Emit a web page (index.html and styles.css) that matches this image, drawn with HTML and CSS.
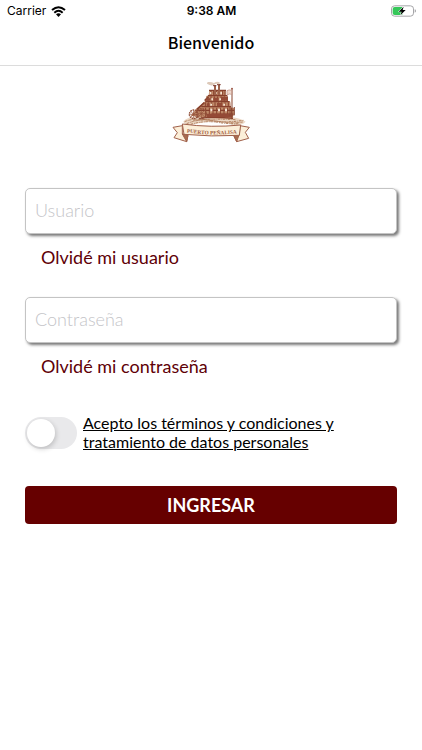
FILE: index.html
```html
<!DOCTYPE html>
<html lang="es">
<head>
<meta charset="utf-8">
<meta name="viewport" content="width=device-width, initial-scale=1">
<title>Bienvenido</title>
<link rel="stylesheet" href="styles.css">
</head>
<body>
<div class="status">
  <div class="carrier">
    <span>Carrier</span>
    <svg class="wifi" viewBox="0 0 45 33" aria-hidden="true">
      <path d="M3 12Q22.500-5 42 12" fill="none" stroke="#000" stroke-width="6"/>
      <path d="M10 20Q22.500 9 35 20" fill="none" stroke="#000" stroke-width="6"/>
      <path d="M15 25Q22.500 19 30 25L22.500 33Z"/>
    </svg>
  </div>
  <time class="clock">9:38 AM</time>
  <svg class="battery" viewBox="0 0 75 36" aria-hidden="true">
    <rect x="1.500" y="2.500" width="66" height="31" rx="9" fill="#fff" stroke="#a5a5a8" stroke-width="3"/>
    <path d="M11 6H34V30H11Q5 30 5 24V12Q5 6 11 6Z" fill="#35c759"/>
    <path d="M71 13Q75 14 75 18T71 23Z" fill="#a5a5a8"/>
    <path d="M38 5L23 20H32L28 31L44 15H35Z" stroke="#fff" stroke-width="3" paint-order="stroke"/>
  </svg>
</div>
<header class="nav"><h1>Bienvenido</h1></header>
<main>
  <svg class="logo" viewBox="3 0 300 228" role="img" aria-label="Puerto Peñalisa">
    <path d="M70 142Q88 125 113 129H215Q241 132 257 143Q246 154 226 155Q188 140 151 143Q107 146 86 157Q72 151 70 142Z" fill="#ecd9c6"/>
    <g fill="none" stroke="#ad7754" stroke-width="3" stroke-dasharray="7 3 3 2">
      <path d="M74 143Q104 130 148 139T250 139M80 149Q120 132 168 141T248 144M92 151Q132 139 173 145T237 149M100 139Q155 133 226 137"/>
    </g>
    <path d="M108 105L136 81L139 66L146 64L148 48H197V65L204 69V81L211 85V99L222 102L223 119L216 134L134 132L92 125Z" fill="#c08a69"/>
    <g fill="none" stroke="#87402d" stroke-width="4">
      <path d="M147 49H198M144 65H202M136 83H209M124 98H213M109 109H222M123 132Q166 128 219 133"/>
      <path d="M153 51V64M161 51V64M170 51V64M179 51V64M188 51V64M195 51V64" stroke-width="3"/>
      <path d="M144 67V81M153 67V81M163 67V81M173 67V81M183 67V81M193 67V81M202 67V81" stroke-width="3"/>
      <path d="M136 85V97M145 85V97M155 85V97M165 85V97M175 85V97M185 85V97M195 85V97M205 85V97" stroke-width="3"/>
      <path d="M137 101V130M148 101V130M159 101V130M170 101V130M181 101V130M192 101V130M203 101V130M214 102V130" stroke-width="3"/>
      <path d="M134 80L145 69M111 106L133 86M154 121H220" stroke-width="5"/>
    </g>
    <path d="M138 73H150V80H137ZM160 71H176V81H160ZM183 69H201V80H183ZM140 88H149V96H140ZM171 87H187V96H171ZM140 119H220L216 130H140Z" fill="#944a36"/>
    <g fill="#f5e3d2"><path d="M149 54H154V61H149ZM165 54H170V61H165ZM181 54H186V61H181ZM154 73H159V79H154ZM178 73H183V79H178ZM151 89H156V95H151ZM190 89H195V95H190ZM151 104H157V112H151ZM174 104H180V112H174ZM195 104H201V112H195Z"/></g>
    <path d="M162 36H168V63H162ZM174 33H180V63H174Z" fill="#9d624a"/>
    <path d="M159 35H169M171 32H182" stroke="#70281c" stroke-width="3"/>
    <path d="M162 33Q151 36 144 31Q137 27 145 24Q154 23 162 27Q172 20 180 26Q179 31 174 31Q168 27 162 33Z" fill="#ddc9b9"/>
    <path d="M216 46V134M210 99V126M223 99V124" fill="none" stroke="#864633" stroke-width="3"/>
    <path d="M201 50Q207 46 215 49V61Q208 58 201 63Z" fill="#efd9ce" stroke="#bd8979" stroke-width="2"/>
    <circle cx="216" cy="44" r="3" fill="#9c5948"/>
    <path d="M211 96L216 73" fill="none" stroke="#c69582" stroke-width="2"/>
    <g fill="none" stroke="#92503a" stroke-width="4">
      <circle cx="101" cy="121" r="13" stroke-dasharray="5 2"/>
      <circle cx="124" cy="119" r="15" stroke-dasharray="6 2"/>
      <path d="M89 121H113M101 109V133M92 112L110 130M110 112L92 130M111 119H138M124 105V133M114 109L134 129M134 109L114 129" stroke-width="2"/>
    </g>
    <g fill="#fcefd9" stroke="#a0604a" stroke-width="3" stroke-linejoin="round">
      <path d="M67 155L39 160L52 176L42 191L80 203L84 184L67 180Z"/>
      <path d="M240 155L268 160L256 175L266 193L230 203L221 184L238 180Z"/>
      <path d="M67 180L84 184L80 203ZM238 180L221 184L230 203Z" fill="#a86c4f"/>
      <path d="M67 150Q153 162 242 153L238 184Q154 189 72 181Z"/>
    </g>
    <path id="ribbon" d="M72 174Q154 187 239 177" fill="none"/>
    <text class="logo-text"><textPath href="#ribbon" startOffset="50%" text-anchor="middle">PUERTO PEÑALISA</textPath></text>
  </svg>
  <form class="login">
    <div class="field">
      <input class="box" type="text" placeholder="Usuario" aria-label="Usuario">
      <a class="forgot" href="#">Olvidé mi usuario</a>
    </div>
    <div class="field">
      <input class="box" type="password" placeholder="Contraseña" aria-label="Contraseña">
      <a class="forgot" href="#">Olvidé mi contraseña</a>
    </div>
    <div class="terms">
      <input class="switch" id="accept" type="checkbox" role="switch">
      <label for="accept">Acepto los términos y condiciones y tratamiento de datos personales</label>
    </div>
    <button class="submit" type="button">INGRESAR</button>
  </form>
</main>
</body>
</html>
```
FILE: styles.css
```css
* { box-sizing: border-box; }
body {
  margin: 0;
  background: #fff;
  color: #000;
  font-family: Lato, sans-serif;
}
.status {
  display: grid;
  grid-template-columns: 1fr auto 1fr;
  align-items: center;
  height: 22px;
  padding: 0 6px 0 7px;
  font: 12px/22px Inter, sans-serif;
}
.carrier { display: flex; align-items: center; gap: 5px; }
.wifi { width: 15px; height: 11px; }
.clock { font-weight: 600; }
.battery { width: 25px; height: 12px; justify-self: end; }
.nav {
  display: flex;
  align-items: center;
  justify-content: center;
  height: 44px;
  padding-bottom: 4px;
  border-bottom: 1px solid #dcdcdc;
}
h1 { margin: 0; font: 500 16px/24px "Noto Sans CJK JP", "Noto Sans", sans-serif; }
main { padding: 8px 25px 24px; }
.logo { display: block; width: 100px; height: 76px; margin: 0 auto 38px; }
.logo-text {
  font: bold 16px "Liberation Serif", serif;
  fill: #a05a40;
}
.field { margin-bottom: 27px; }
.box {
  display: block;
  width: 100%;
  height: 46px;
  padding: 0 9px 2px;
  border: 1px solid #c4c4c4;
  border-radius: 5px;
  background: #fff;
  box-shadow: 2px 2px 3px #777;
  font: 300 18px/24px Lato, sans-serif;
}
.box::placeholder { color: #c4c4c8; opacity: 1; }
.forgot {
  display: block;
  width: fit-content;
  margin: 10px 16px 0;
  color: #600007;
  font-size: 18px;
  line-height: 26px;
  text-decoration: none;
}
.terms { display: flex; align-items: center; gap: 6px; margin-top: 34px; }
.terms label { max-width: 270px; padding-bottom: 2px; font-size: 16px; line-height: 19px; text-decoration: underline; }
.switch {
  appearance: none;
  flex: none;
  width: 52px;
  height: 32px;
  margin: 0;
  padding: 2px;
  border-radius: 16px;
  background: #e9e9eb;
}
.switch::before {
  content: "";
  display: block;
  width: 28px;
  height: 28px;
  border-radius: 50%;
  background: #fff;
  box-shadow: 1px 2px 5px #00000030;
}
.switch:checked { background: #35c759; }
.switch:checked::before { margin-left: auto; }
.submit {
  display: block;
  width: 100%;
  height: 38px;
  margin-top: 33px;
  padding: 0;
  border: 0;
  border-radius: 4px;
  background: #660000;
  color: #fff;
  font: bold 18px/24px Lato, sans-serif;
}
```
